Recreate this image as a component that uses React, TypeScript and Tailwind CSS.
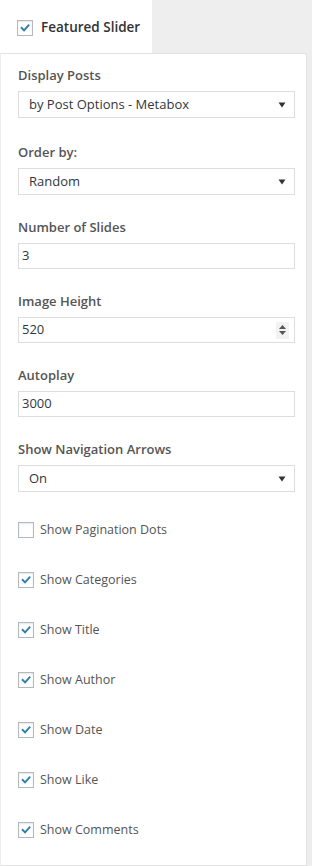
import React from 'react';

const font = { fontFamily: '"Open Sans", "Noto Sans", Arial, sans-serif' };

const Check: React.FC<{ checked?: boolean }> = ({ checked }) => (
    <span className="w-4 h-4 border border-[#b4b9be] bg-white shadow-[inset_0_1px_2px_rgba(0,0,0,0.1)] flex items-center justify-center shrink-0">
        {checked && (
            <svg width="14" height="14" viewBox="0 0 20 20">
                <path d="M15 4.2 8.6 11.3 5.2 8 3.3 10 8.7 15.3 17 6.2Z" fill="#2c7fa8" />
            </svg>
        )}
    </span>
);

const Caret = () => (
    <svg width="8" height="6" viewBox="0 0 8 6" className="shrink-0">
        <path d="M0.5 0.5h7L4 5.5Z" fill="#333" />
    </svg>
);

const Field: React.FC<{ label: string; children: React.ReactNode; className?: string }> = ({ label, children, className }) => (
    <div className={`flex flex-col gap-[6px] ${className ?? ''}`}>
        <label className="text-[13px] leading-5 font-semibold text-[#555]">{label}</label>
        {children}
    </div>
);

const SelectBox: React.FC<{ value: string }> = ({ value }) => (
    <div className="h-[27px] border border-[#dddddd] bg-white flex items-center justify-between pl-[10px] pr-[8px] text-[13px] text-[#32373c]">
        <span>{value}</span>
        <Caret />
    </div>
);

const TextBox: React.FC<{ value: string; spinner?: boolean }> = ({ value, spinner }) => (
    <div className="h-[26px] border border-[#dddddd] bg-white flex items-center justify-between pl-[3px] pr-[5px] text-[13px] text-[#32373c]">
        <span>{value}</span>
        {spinner && (
            <span className="w-[13px] h-[17px] bg-[#f2f2f2] flex flex-col items-center justify-center gap-[2px]">
                <svg width="7" height="4" viewBox="0 0 7 4"><path d="M0 4h7L3.5 0Z" fill="#555" /></svg>
                <svg width="7" height="4" viewBox="0 0 7 4"><path d="M0 0h7L3.5 4Z" fill="#555" /></svg>
            </span>
        )}
    </div>
);

const toggles: { label: string; on: boolean }[] = [
    { label: 'Show Pagination Dots', on: false },
    { label: 'Show Categories', on: true },
    { label: 'Show Title', on: true },
    { label: 'Show Author', on: true },
    { label: 'Show Date', on: true },
    { label: 'Show Like', on: true },
    { label: 'Show Comments', on: true },
];

export default function App() {
    return (
        <div className="w-[312px] h-[866px] bg-[#eeeeee] flex flex-col" style={font}>
            <div className="h-[53px] flex">
                <div className="w-[152px] bg-white flex items-center gap-[8px] pl-[17px] pt-[2px]">
                    <Check checked />
                    <span className="text-[13.5px] font-semibold text-[#333]">Featured Slider</span>
                </div>
            </div>
            <div className="w-[307px] flex-1 bg-white border border-[#e2e2e2] border-l-[#eeeeee] pl-[17px] pr-[11px] pt-[11px]">
                <div className="flex flex-col gap-[22px]">
                    <Field label="Display Posts"><SelectBox value="by Post Options - Metabox" /></Field>
                    <Field label="Order by:" className="mt-[2px]"><SelectBox value="Random" /></Field>
                    <Field label="Number of Slides"><TextBox value="3" /></Field>
                    <Field label="Image Height"><TextBox value="520" spinner /></Field>
                    <Field label="Autoplay"><TextBox value="3000" /></Field>
                    <Field label="Show Navigation Arrows"><SelectBox value="On" /></Field>
                </div>
                <div className="flex flex-col gap-[32px] mt-[29px]">
                    {toggles.map((t) => (
                        <div key={t.label} className="h-[18px] flex items-center gap-[6px]">
                            <Check checked={t.on} />
                            <span className="text-[12.5px] text-[#555]">{t.label}</span>
                        </div>
                    ))}
                </div>
            </div>
        </div>
    );
}
